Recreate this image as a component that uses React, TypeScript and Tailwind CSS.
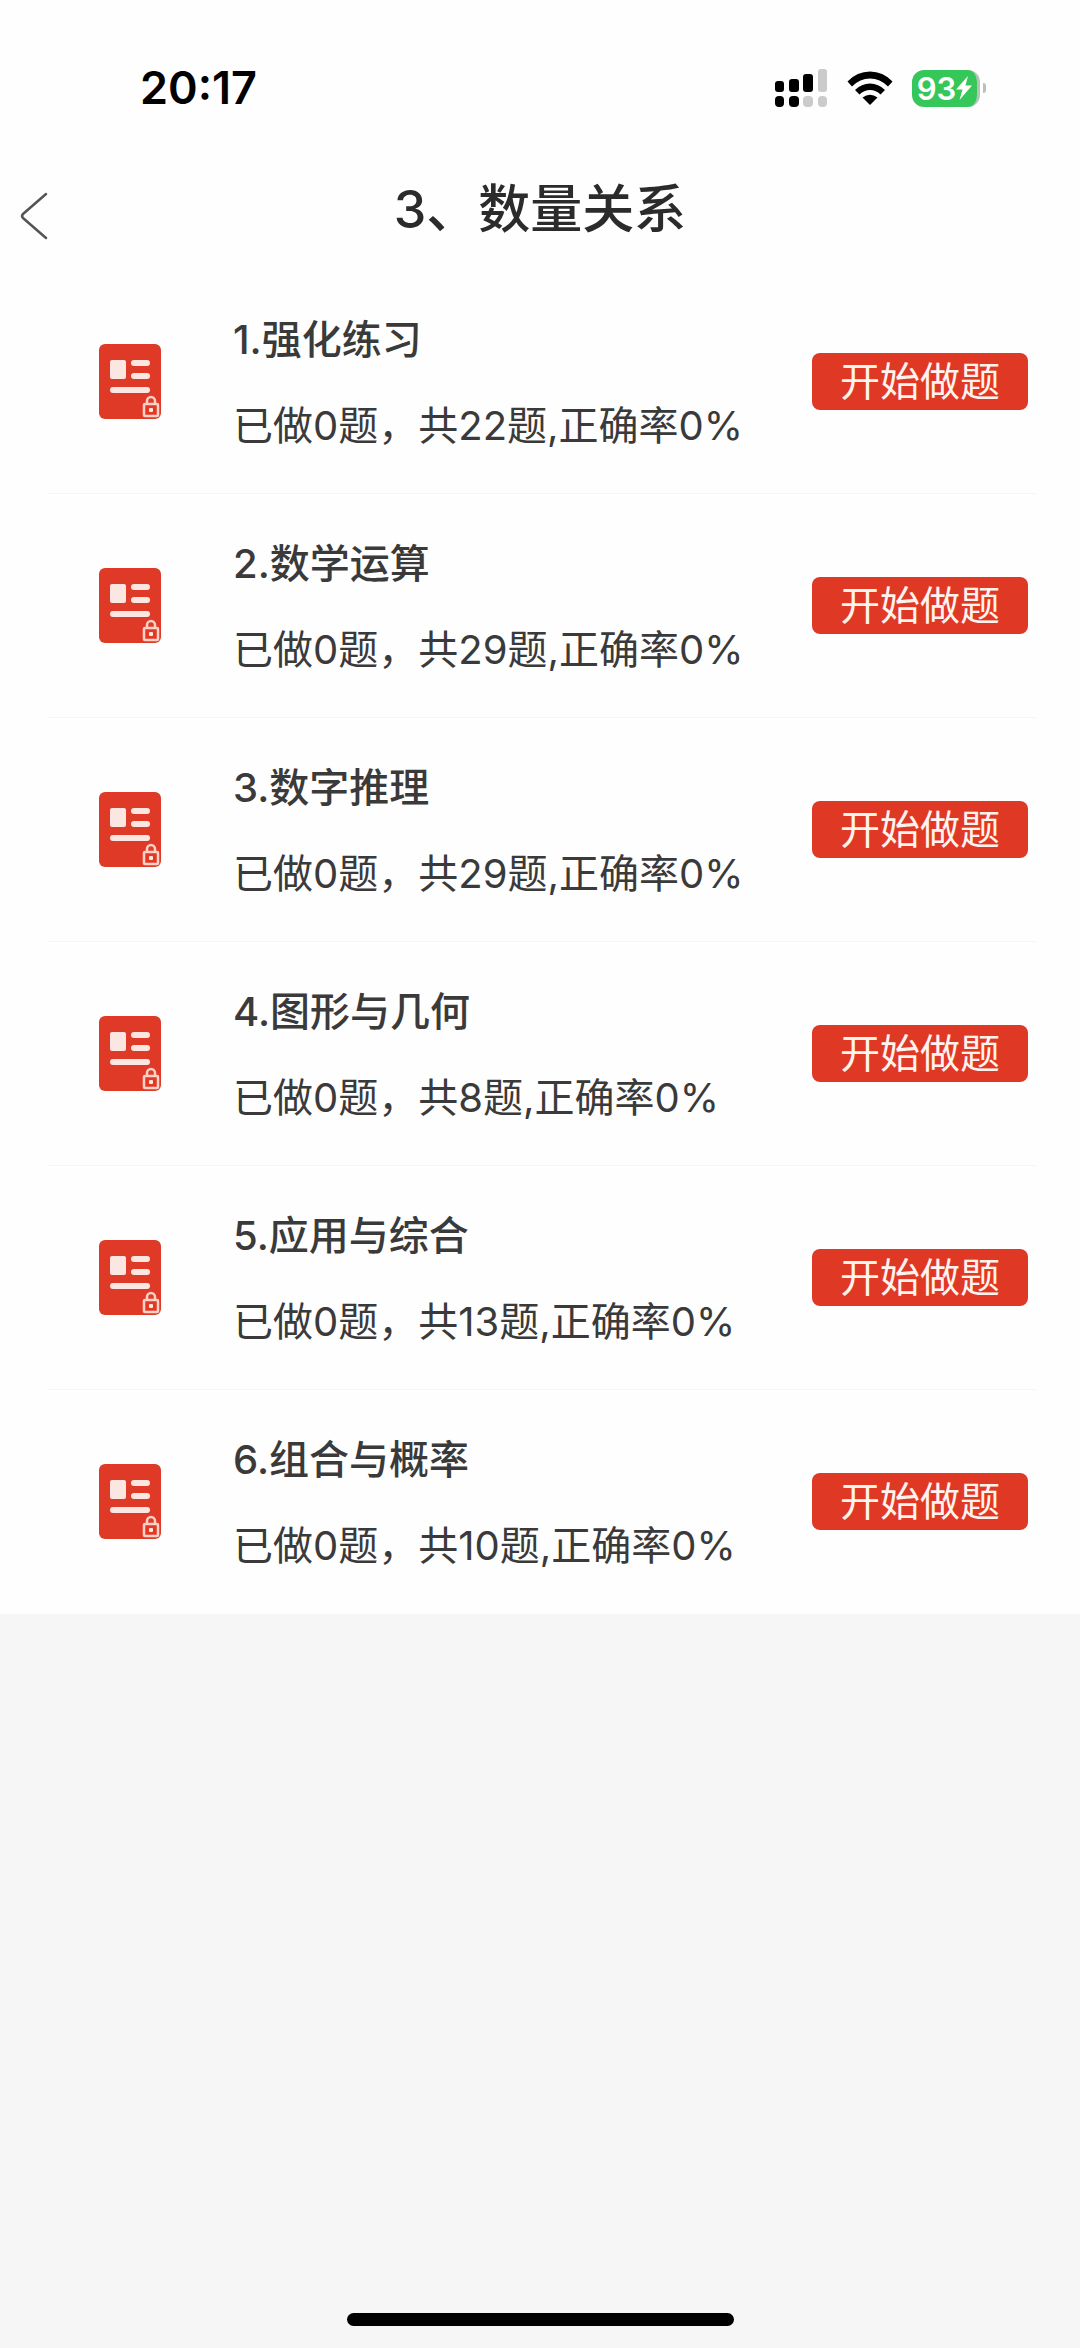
import { useState } from 'react';

interface Exercise {
  id: number;
  name: string;
  done: number;
  total: number;
  accuracy: number;
}

const exercises: Exercise[] = [
  { id: 1, name: '强化练习', done: 0, total: 22, accuracy: 0 },
  { id: 2, name: '数学运算', done: 0, total: 29, accuracy: 0 },
  { id: 3, name: '数字推理', done: 0, total: 29, accuracy: 0 },
  { id: 4, name: '图形与几何', done: 0, total: 8, accuracy: 0 },
  { id: 5, name: '应用与综合', done: 0, total: 13, accuracy: 0 },
  { id: 6, name: '组合与概率', done: 0, total: 10, accuracy: 0 },
];

function SignalIcon() {
  return (
    <svg width="54" height="38" viewBox="0 0 54 38" aria-hidden="true">
      <g fill="#000">
        <rect x="1" y="12" width="9" height="11" rx="3" />
        <rect x="15" y="10" width="10" height="13" rx="3" />
        <rect x="29" y="5" width="10" height="18" rx="3" />
        <rect x="1" y="27" width="9" height="11" rx="4" />
        <rect x="15" y="27" width="10" height="11" rx="4" />
      </g>
      <g fill="#cbcbcb">
        <rect x="44" y="0" width="9" height="23" rx="3" />
        <rect x="29" y="27" width="10" height="11" rx="4" />
        <rect x="44" y="27" width="9" height="11" rx="4" />
      </g>
    </svg>
  );
}

function WifiIcon() {
  return (
    <svg width="46" height="34" viewBox="0 0 46 34" aria-hidden="true">
      <path d="M0.5 10.5 Q10 0.5 23 0.5 Q36 0.5 45.5 10.5 L41 15.5 Q33 7.5 23 7.5 Q13 7.5 5 15.5 Z" fill="#000" />
      <path d="M8 19 Q14.5 12.5 23 12.5 Q31.5 12.5 38 19 L33.5 23.5 Q29 19 23 19 Q17 19 12.5 23.5 Z" fill="#000" />
      <path d="M15.5 26.5 Q23 21 30.5 26.5 L23 34 Z" fill="#000" />
    </svg>
  );
}

function Battery() {
  return (
    <div className="flex items-center gap-[3px]">
      <div className="flex h-[37px] w-[68px] items-center justify-center rounded-xl border-r-[3px] border-[#b5c4b8] bg-[#35c759]">
        <span className="text-[31px] leading-[37px] font-semibold text-white">93</span>
        <svg width="16" height="24" viewBox="0 0 16 24" aria-hidden="true">
          <path d="M12 0 L0 13.5 H6.5 L3.5 24 L16 9.5 H9.5 Z" fill="#fff" />
        </svg>
      </div>
      <div className="h-[10px] w-[3px] rounded-r-full bg-[#bdbdbd]" />
    </div>
  );
}

function StatusBar() {
  return (
    <div className="flex h-[176px] items-center justify-between pr-[94px] pl-[140px]">
      <time className="text-[45px] leading-[56px] font-semibold text-black">20:17</time>
      <div className="flex items-center gap-[19px]">
        <SignalIcon />
        <WifiIcon />
        <Battery />
      </div>
    </div>
  );
}

function PaperIcon() {
  return (
    <svg width="62" height="75" viewBox="0 0 62 75" className="shrink-0" aria-hidden="true">
      <rect width="62" height="75" rx="6" fill="#df3a28" />
      <g fill="#fbe6e2">
        <rect x="11" y="16" width="16" height="19" rx="2" />
        <rect x="32" y="16" width="19" height="6" rx="3" />
        <rect x="32" y="29" width="19" height="6" rx="3" />
        <rect x="11" y="43" width="40" height="6" rx="3" />
        <rect x="50" y="64" width="4" height="4" rx="1" />
      </g>
      <g fill="none" stroke="#fbd0c5" strokeWidth="2.500">
        <rect x="45" y="60" width="14" height="12" rx="1" />
        <path d="M48 60 V57 A4 4 0 0 1 56 57 V60" />
      </g>
    </svg>
  );
}

function ExerciseRow({ exercise, onStart }: { exercise: Exercise; onStart: (id: number) => void }) {
  const { id, name, done, total, accuracy } = exercise;

  return (
    <li className="mr-11 ml-12 flex h-56 items-center border-b border-[#f5f5f5] pr-2 pl-[51px] last:border-transparent">
      <PaperIcon />
      <div className="ml-[72px] flex flex-1 flex-col gap-[26px] pt-[3px] text-[40px] leading-[60px] text-[#3a3a3a]">
        <h2 className="font-medium">{`${id}.${name}`}</h2>
        <p className="whitespace-nowrap">{`已做${done}题，共${total}题,正确率${accuracy}%`}</p>
      </div>
      <button
        type="button"
        onClick={() => onStart(id)}
        className="h-[57px] w-[216px] shrink-0 rounded-lg bg-[#df3926] text-[40px] leading-[57px] text-[#fff3ee]"
      >
        开始做题
      </button>
    </li>
  );
}

export default function App() {
  const [, setActiveId] = useState<number | null>(null);

  return (
    <div className="flex min-h-screen flex-col bg-[#f6f6f6] font-['Inter','Noto_Sans_CJK_SC',sans-serif]">
      <div className="bg-[#fefefe]">
        <StatusBar />

        {/* Page header */}
        <header className="grid h-[94px] grid-cols-[80px_1fr_80px] items-start">
          <button type="button" aria-label="返回" className="pt-4 pl-5">
            <svg width="28" height="48" viewBox="0 0 28 48" aria-hidden="true">
              <path
                d="M26 2 L3 22 Q1 24 3 26 L26 46"
                fill="none"
                stroke="#555"
                strokeWidth="2.500"
                strokeLinecap="round"
              />
            </svg>
          </button>
          <h1 className="text-center text-[52px] leading-[68px] font-medium text-[#2b2b2b]">3、数量关系</h1>
        </header>

        <ul>
          {exercises.map((exercise) => (
            <ExerciseRow key={exercise.id} exercise={exercise} onStart={setActiveId} />
          ))}
        </ul>
      </div>

      {/* Home indicator */}
      <div className="mx-auto mt-auto mb-[22px] h-[13px] w-[387px] rounded-full bg-black" />
    </div>
  );
}
